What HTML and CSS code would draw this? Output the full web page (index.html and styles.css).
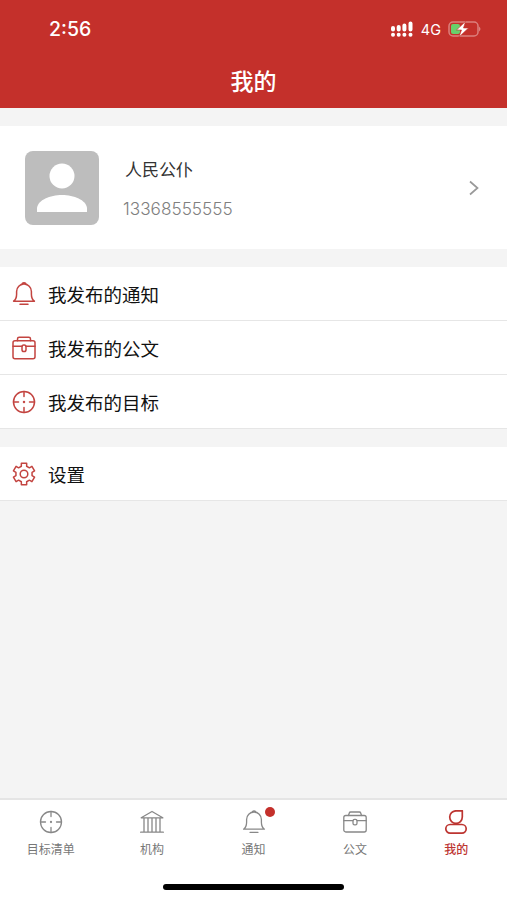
FILE: index.html
```html
<!DOCTYPE html>
<html lang="zh-CN">
<head>
<meta charset="utf-8">
<title>我的</title>
<link rel="stylesheet" href="styles.css">
</head>
<body>
<svg class="defs" aria-hidden="true">
  <symbol id="bell" viewBox="0 0 24 24"><path d="M10 2.800a2 2 0 0 1 4 0M1.600 19.200c2-1.500 3-3.700 3-7V9.400a7.400 7.400 0 0 1 14.800 0v2.800c0 3.300 1 5.500 3 7zM8 22.300h8"/></symbol>
  <symbol id="bag" viewBox="0 0 24 24"><rect x="1" y="4.700" width="22" height="18" rx="2"/><path d="M5.500 4.700V3a1.700 1.700 0 0 1 1.700-1.700h9.600A1.700 1.700 0 0 1 18.500 3v1.700M1 10.200h9M14 10.200h9"/><rect x="10" y="9" width="4" height="6.500" rx="1.800"/></symbol>
  <symbol id="bag-wide" viewBox="0 0 24 24"><rect x=".8" y="5.500" width="22.400" height="16.500" rx="2"/><path d="M5.500 5.500 6.300 3A1.400 1.400 0 0 1 7.700 2h8.600a1.400 1.400 0 0 1 1.400 1l.8 2.500M.8 10.600H10M14 10.600h9.200"/><rect x="10" y="9.300" width="4" height="5.500" rx="1.600"/></symbol>
  <symbol id="target" viewBox="0 0 24 24"><circle cx="12" cy="12" r="10.500"/><path d="M12 1.500v5M12 17.500v5M1.500 12h5M17.500 12h5"/><circle cx="12" cy="12" r=".5"/></symbol>
  <symbol id="gear" viewBox="0 0 24 24"><path d="M9.340 1.330h5.320V4.250L17.380 5.810 19.910 4.360 22.570 8.970 20.050 10.440V13.560L22.570 15.030 19.910 19.640 17.380 18.190 14.660 19.750V22.670H9.340V19.750L6.620 18.190 4.090 19.640 1.430 15.030 3.950 13.560V10.440L1.430 8.970 4.090 4.360 6.620 5.810 9.340 4.250z"/><circle cx="12" cy="12" r="3.800"/></symbol>
  <symbol id="bank" viewBox="0 0 24 24"><path d="M1.200 7.800 12 1.500 22.800 7.800zM4 8v14M8 8v14M12 8v14M16 8v14M20 8v14M.6 22.200h22.800"/></symbol>
  <symbol id="user" viewBox="0 0 24 24"><path d="M18.300 .8v6.300A6.300 6.300 0 1 1 12 .8z"/><rect x="1.800" y="14.500" width="20.400" height="8.600" rx="4.300"/></symbol>
</svg>
<div class="app">
  <header class="header">
    <div class="status">
      <span class="time">2:56</span>
      <svg class="signal" viewBox="0 0 22 16"><path d="M2 7v1.500M7.700 6v2.500M13.400 4.500v4M19.500 2.500v6M2 13.700h.01M7.700 13.700h.01M13.400 13.700h.01M19.500 13.700h.01"/></svg>
      <span class="network">4G</span>
      <svg class="battery" viewBox="0 0 33 18"><rect class="case" x="1" y="2" width="29" height="14" rx="4"/><path class="cap" d="M31 6.500q3 2.500 0 5z"/><rect class="charge" x="3" y="4" width="9" height="10" rx="2"/><path class="bolt" d="M17.500 1.500 8.500 10h5l-2.500 7L20.500 8h-5z"/></svg>
    </div>
    <h1 class="title">我的</h1>
  </header>
  <main class="content">
    <section class="profile">
      <svg class="avatar" viewBox="0 0 74 74"><rect width="74" height="74" rx="8" fill="#bdbdbd"/><circle cx="37" cy="25" r="12.500" fill="#fff"/><path d="M12 61v-4c1-8 13-13 25-13s24 5 25 13v4z" fill="#fff"/></svg>
      <div class="person">
        <div class="name">人民公仆</div>
        <div class="phone">13368555555</div>
      </div>
      <svg class="chevron" viewBox="0 0 12 16"><path d="M2 1.500 9.500 8 2 14.500"/></svg>
    </section>
    <nav class="group">
      <div class="row"><svg class="icon"><use href="#bell"/></svg><span>我发布的通知</span></div>
      <div class="row"><svg class="icon"><use href="#bag"/></svg><span>我发布的公文</span></div>
      <div class="row"><svg class="icon"><use href="#target"/></svg><span>我发布的目标</span></div>
    </nav>
    <nav class="group">
      <div class="row"><svg class="icon"><use href="#gear"/></svg><span>设置</span></div>
    </nav>
  </main>
  <footer class="footer">
    <nav class="tabs">
      <div class="tab"><svg class="icon"><use href="#target"/></svg><span>目标清单</span></div>
      <div class="tab"><svg class="icon"><use href="#bank"/></svg><span>机构</span></div>
      <div class="tab"><svg class="icon"><use href="#bell"/></svg><i class="badge"></i><span>通知</span></div>
      <div class="tab"><svg class="icon"><use href="#bag-wide"/></svg><span>公文</span></div>
      <div class="tab active"><svg class="icon"><use href="#user"/></svg><span>我的</span></div>
    </nav>
    <div class="home"></div>
  </footer>
</div>
</body>
</html>
```

FILE: styles.css
```css
* { box-sizing: border-box; }
body { margin: 0; background: #f4f4f4; font-family: "Liberation Sans", "Noto Sans CJK SC", sans-serif; }
.defs { position: absolute; width: 0; height: 0; }
.app { display: flex; flex-direction: column; height: 900px; overflow: hidden; }
.header { height: 108px; background: #c4302b; color: #fff; }
.status { display: flex; align-items: center; height: 56px; padding: 2px 26px 0 49px; }
.time { flex: 1; font: 500 19.500px/24px Inter, sans-serif; }
.signal { width: 22px; height: 16px; fill: none; stroke: #fff; stroke-width: 4; stroke-linecap: round; }
.network { margin: 2px 7px 0 8px; font: 400 14.500px/18px Inter, sans-serif; }
.battery { width: 33px; height: 18px; }
.case { fill: none; stroke: #dc807d; stroke-width: 1.500; }
.cap { fill: #dc807d; }
.charge { fill: #68d06b; }
.bolt { fill: #fff; stroke: #c4302b; stroke-width: .6; }
.title { margin: 9px 0 0; text-align: center; font-size: 23px; line-height: 34px; font-weight: 500; }
.content { flex: 1; display: flex; flex-direction: column; gap: 18px; padding-top: 18px; }
.profile { display: flex; align-items: center; height: 123px; padding: 0 27px 0 25px; background: #fff; }
.avatar { width: 74px; height: 74px; }
.person { flex: 1; padding: 5px 0 0 24px; }
.name { padding-left: 2px; font-size: 17px; line-height: 24px; color: #333; }
.phone { margin-top: 14px; font: 300 17.200px/24px Inter, sans-serif; color: #808080; }
.chevron { width: 12px; height: 16px; fill: none; stroke: #999; stroke-width: 1.700; }
.group { background: #fff; }
.row { display: flex; align-items: center; gap: 12px; height: 54px; padding: 0 12px; border-bottom: 1px solid #e6e6e6; font-size: 18.500px; color: #111; }
.icon { display: block; width: 24px; height: 24px; fill: none; stroke: currentColor; stroke-width: 1.500; stroke-linejoin: round; stroke-linecap: round; }
.row .icon { color: #c34440; }
.footer { height: 102px; background: #fff; border-top: 2px solid #e5e5e5; }
.tabs { display: flex; height: 83px; }
.tab { position: relative; flex: 1; display: flex; flex-direction: column; align-items: center; padding-top: 10px; font-size: 12px; line-height: 18px; color: #777; }
.tab span { margin-top: 7px; }
.tab .icon { stroke-width: 1.300; color: #888; }
.tab.active, .tab.active .icon { color: #bd3531; }
.tab.active { font-weight: 500; }
.tab.active .icon { stroke-width: 1.700; }
.badge { position: absolute; top: 7px; left: 62px; width: 10px; height: 10px; border-radius: 50%; background: #c4302b; }
.home { width: 181px; height: 6px; margin: 1px auto 0; border-radius: 3px; background: #000; }
```
